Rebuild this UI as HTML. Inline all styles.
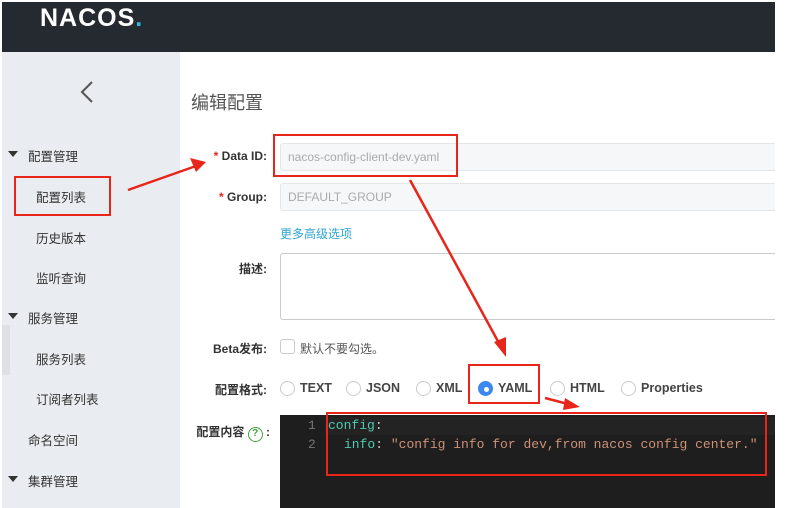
<!DOCTYPE html>
<html><head><meta charset="utf-8"><style>
*{margin:0;padding:0;box-sizing:border-box}
body{width:788px;height:508px;background:#fff;position:relative;overflow:hidden;font-family:"Liberation Sans","Noto Sans CJK SC",sans-serif;font-size:12px;color:#333}
.a{position:absolute;white-space:nowrap}
.side{left:2px;top:52px;width:178px;height:456px;background:#e9ecf0}
.lbl{font-size:12px;color:#333;text-align:right;width:90px;left:177px;font-weight:bold}
.inp{background:#f6f7f9;border:1px solid #e4e6ea;border-right:none;border-radius:3px 0 0 3px}
.rb{border:2px solid #e8251b}
.radio{width:15px;height:15px;border:1px solid #c8cbd0;border-radius:50%;background:#fff}
.ft{font-size:12.5px;color:#444;font-weight:bold}
.mono{font-family:"Liberation Mono",monospace;font-size:13px}
.tri{width:0;height:0;border-left:5px solid transparent;border-right:5px solid transparent;border-top:6px solid #333}
</style></head><body>
<div class="a" style="left:2px;top:2px;width:773px;height:50px;background:#252a31"></div>
<div class="a" style="left:40px;top:4px;font-size:25px;font-weight:bold;color:#fff;letter-spacing:1px">NACOS<span style="color:#2fb9d7">.</span></div>
<div class="a side"></div>
<div class="a" style="left:2px;top:325px;width:8px;height:50px;background:#dde0e4"></div>
<svg class="a" style="left:78px;top:80px" width="18" height="24"><polyline points="14,2 4,12 14,22" fill="none" stroke="#555" stroke-width="2"/></svg>
<div class="a tri" style="left:8px;top:151px"></div>
<div class="a" style="left:28px;top:146px;font-size:12.5px">配置管理</div>
<div class="a" style="left:36px;top:187px;font-size:12.5px">配置列表</div>
<div class="a" style="left:36px;top:228px;font-size:12.5px">历史版本</div>
<div class="a" style="left:36px;top:268px;font-size:12.5px">监听查询</div>
<div class="a tri" style="left:8px;top:313px"></div>
<div class="a" style="left:28px;top:308px;font-size:12.5px">服务管理</div>
<div class="a" style="left:36px;top:349px;font-size:12.5px">服务列表</div>
<div class="a" style="left:36px;top:389px;font-size:12.5px">订阅者列表</div>
<div class="a" style="left:28px;top:430px;font-size:12.5px">命名空间</div>
<div class="a tri" style="left:8px;top:476px"></div>
<div class="a" style="left:28px;top:471px;font-size:12.5px">集群管理</div>
<div class="a rb" style="left:14px;top:176px;width:97px;height:40px"></div>

<div class="a" style="left:191px;top:89px;font-size:18px;color:#555">编辑配置</div>

<div class="a lbl" style="top:149px"><span style="color:#e8251b">*</span> Data ID:</div>
<div class="a inp" style="left:280px;top:143px;width:495px;height:28px"></div>
<div class="a" style="left:288px;top:150px;color:#aaa;font-size:12px">nacos-config-client-dev.yaml</div>
<div class="a rb" style="left:273px;top:134px;width:185px;height:43px"></div>

<div class="a lbl" style="top:190px"><span style="color:#e8251b">*</span> Group:</div>
<div class="a inp" style="left:280px;top:183px;width:495px;height:28px"></div>
<div class="a" style="left:288px;top:190px;color:#aaa">DEFAULT_GROUP</div>
<div class="a" style="left:280px;top:225px;color:#2fa4d0">更多高级选项</div>

<div class="a lbl" style="top:260px">描述:</div>
<div class="a" style="left:280px;top:253px;width:495px;height:67px;border:1px solid #c8cbd0;border-right:none;border-radius:3px 0 0 3px"></div>

<div class="a lbl" style="top:340px">Beta发布:</div>
<div class="a" style="left:280px;top:339px;width:15px;height:15px;border:1px solid #c8cbd0;border-radius:3px"></div>
<div class="a" style="left:300px;top:340px;color:#555">默认不要勾选。</div>

<div class="a lbl" style="top:381px">配置格式:</div>
<div class="a radio" style="left:280px;top:381px"></div><div class="a ft" style="left:300px;top:381px">TEXT</div>
<div class="a radio" style="left:346px;top:381px"></div><div class="a ft" style="left:366px;top:381px">JSON</div>
<div class="a radio" style="left:416px;top:381px"></div><div class="a ft" style="left:436px;top:381px">XML</div>
<div class="a radio" style="left:478px;top:381px;background:#3c87f0;border-color:#3c87f0"><div style="position:absolute;left:4.5px;top:4.5px;width:5px;height:5px;border-radius:50%;background:#fff"></div></div><div class="a ft" style="left:498px;top:381px">YAML</div>
<div class="a radio" style="left:550px;top:381px"></div><div class="a ft" style="left:570px;top:381px">HTML</div>
<div class="a radio" style="left:621px;top:381px"></div><div class="a ft" style="left:641px;top:381px">Properties</div>
<div class="a rb" style="left:468px;top:364px;width:72px;height:40px"></div>

<div class="a lbl" style="top:423px;left:170px;width:100px">配置内容 <span style="display:inline-block;width:15px;height:15px;border:1.5px solid #3aa53a;border-radius:50%;color:#3aa53a;font-size:10px;text-align:center;line-height:12px">?</span> :</div>
<div class="a" style="left:280px;top:415px;width:495px;height:93px;background:#1e1e1e"></div>
<div class="a" style="left:325px;top:417px;width:450px;height:18px;background:#232323"></div>
<div class="a mono" style="left:308px;top:418px;color:#777">1</div>
<div class="a mono" style="left:308px;top:437px;color:#777">2</div>
<div class="a mono" style="left:328px;top:418px;color:#4ec9b0">config<span style="color:#ccc">:</span></div>
<div class="a mono" style="left:344px;top:437px;color:#4ec9b0">info<span style="color:#ccc">:</span> <span style="color:#ce9178">"config info for dev,from nacos config center."</span></div>
<div class="a rb" style="left:326px;top:412px;width:441px;height:64px"></div>

<svg class="a" style="left:0;top:0" width="788" height="508">
<g stroke="#e8251b" stroke-width="2.5" fill="#e8251b">
<line x1="128" y1="190" x2="196" y2="166"/>
<polygon points="206,162 190,158 196,172" stroke="none"/>
<line x1="410" y1="180" x2="500" y2="345"/>
<polygon points="506,357 494,342 506,337" stroke="none"/>
<line x1="545" y1="398" x2="568" y2="404"/>
<polygon points="580,407 565,398 563,410" stroke="none"/>
</g></svg>
</body></html>
